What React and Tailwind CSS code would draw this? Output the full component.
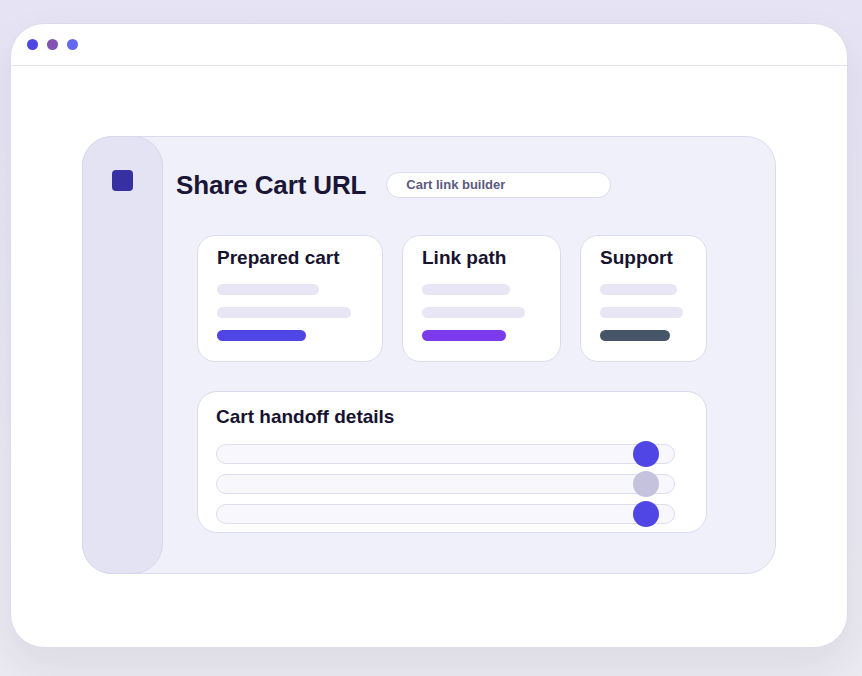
import React from "react";

const cards = [
  { title: "Prepared cart", width: "w-[186px]", bars: ["w-[102px]", "w-[134px]", "w-[89px]"], accent: "bg-[#4f46e5]" },
  { title: "Link path", width: "w-[159px]", bars: ["w-[88px]", "w-[103px]", "w-[84px]"], accent: "bg-[#7c3aed]" },
  { title: "Support", width: "w-[127px]", bars: ["w-[77px]", "w-[83px]", "w-[70px]"], accent: "bg-[#475569]" },
];

const knobs = ["bg-[#4f46e5]", "bg-[#c4c2dd]", "bg-[#4f46e5]"];

export default function App() {
  return (
    <div
      className="h-[676px] w-[862px] overflow-hidden bg-gradient-to-b from-[#e6e4f4] to-[#ebeaf1] pl-[10px] pt-[23px]"
      style={{ fontFamily: '"Liberation Sans", Arial, sans-serif' }}
    >
      {/* Browser window */}
      <div className="flex h-[625px] w-[838px] flex-col overflow-hidden rounded-[34px] border border-[#dddbeb] bg-white shadow-[0_18px_40px_rgba(40,40,90,0.08)]">
        <div className="flex h-[42px] shrink-0 items-center gap-[9px] border-b border-[#e6e4f1] pl-[16px]">
          <span className="h-[11px] w-[11px] rounded-full bg-[#4f46e5]" />
          <span className="h-[11px] w-[11px] rounded-full bg-[#8353b3]" />
          <span className="h-[11px] w-[11px] rounded-full bg-[#6366f1]" />
        </div>

        <div className="flex flex-1 justify-center pt-[70px]">
          {/* App panel */}
          <div className="flex h-[438px] w-[694px] rounded-[30px] border border-[#dcdaee] bg-[#f0f0fa]">
            <aside className="-m-px flex w-[81px] shrink-0 justify-center rounded-[30px] border border-[#d9d7ec] bg-[#e3e3f3] pt-[33px]">
              <div className="h-[21px] w-[21px] rounded-[4px] bg-[#3730a3]" />
            </aside>

            <main className="flex-1 pl-[14px] pt-[33px]">
              <div className="flex h-[30px] items-center gap-5">
                <h1 className="text-[26px] font-bold leading-[30px] tracking-[-0.005em] text-[#1b1635]">Share Cart URL</h1>
                <div className="flex h-[26px] w-[225px] items-center rounded-full border border-[#dcdaee] bg-white pl-[19px] text-[13px] font-bold text-[#5b5a80]">
                  Cart link builder
                </div>
              </div>

              <div className="ml-[21px] mt-[35px] w-[510px]">
                <div className="flex gap-[19px]">
                  {cards.map((c) => (
                    <div
                      key={c.title}
                      className={`${c.width} h-[127px] rounded-[18px] border border-[#dcdaee] bg-white px-[19px] pt-[11px]`}
                    >
                      <h2 className="text-[19px] font-bold leading-[22px] text-[#17132e]">{c.title}</h2>
                      <div className="mt-[15px] flex flex-col gap-[12px]">
                        <div className={`${c.bars[0]} h-[11px] rounded-full bg-[#e8e6f4]`} />
                        <div className={`${c.bars[1]} h-[11px] rounded-full bg-[#e8e6f4]`} />
                        <div className={`${c.bars[2]} h-[11px] rounded-full ${c.accent}`} />
                      </div>
                    </div>
                  ))}
                </div>

                <div className="mt-[29px] h-[142px] rounded-[20px] border border-[#dcdaee] bg-white px-[18px] pt-[14px]">
                  <h2 className="text-[19px] font-bold leading-[22px] text-[#17132e]">Cart handoff details</h2>
                  <div className="mt-[16px] flex flex-col gap-[10px]">
                    {knobs.map((k, i) => (
                      <div key={i} className="relative h-[20px] w-[459px] rounded-full border border-[#dedcef] bg-[#f7f7fd]">
                        <span className={`absolute right-[15px] top-1/2 h-[26px] w-[26px] -translate-y-1/2 rounded-full ${k}`} />
                      </div>
                    ))}
                  </div>
                </div>
              </div>
            </main>
          </div>
        </div>
      </div>
    </div>
  );
}
